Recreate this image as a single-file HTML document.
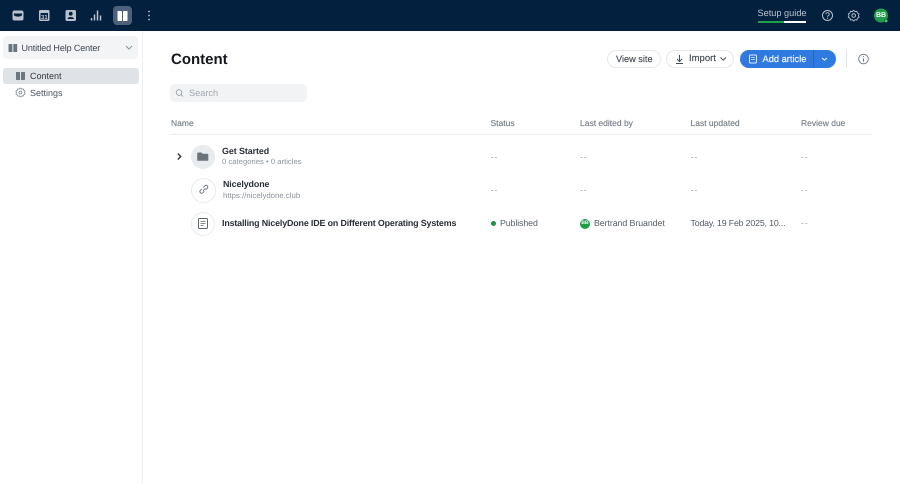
<!DOCTYPE html>
<html><head><meta charset="utf-8"><style>
*{box-sizing:border-box}
html,body{margin:0;padding:0;width:900px;height:484px;overflow:hidden;background:#fff;font-family:"Liberation Sans",sans-serif;color:#2d333a;text-rendering:geometricPrecision}
.t{position:absolute;white-space:nowrap;line-height:14px;font-size:9px}
.h{color:#767f88;font-size:8.500px;top:116px;-webkit-text-stroke:.15px #767f88}
.d{color:#a3a9af;font-size:9px;letter-spacing:.8px}
.b{position:absolute}
svg{position:absolute;overflow:visible}
</style></head><body>
<div class="b" style="left:0;top:0;width:900px;height:31px;background:#03203f"></div>
<div class="b" style="left:113px;top:6px;width:19px;height:19px;border-radius:4px;background:#4d627a"></div>
<svg style="left:0;top:0" width="900" height="31">
<path d="M12.500 12.500a2 2 0 0 1 2-2h7a2 2 0 0 1 2 2v6a2 2 0 0 1-2 2h-7a2 2 0 0 1-2-2z" fill="#b9c2cc"/><path d="M14 13.500h8v1.500a4 1.600 0 0 1-8 0z" fill="#03203f"/>
<rect x="39" y="10" width="10.500" height="11" rx="1.500" fill="#b9c2cc"/><rect x="40.500" y="13" width="7.500" height="6.500" fill="#03203f"/><text x="41" y="19" font-size="6" font-weight="700" fill="#b9c2cc" font-family="Liberation Sans">31</text>
<rect x="65.500" y="10" width="10.500" height="11" rx="1.500" fill="#b9c2cc"/><circle cx="70.700" cy="13.700" r="1.900" fill="#03203f"/><path d="M67.500 19c.3-2.600 6.200-2.600 6.500 0z" fill="#03203f"/>
<path d="M91.500 20.500v-2.500M94.500 20.500v-6M97.500 20.500v-10M100.500 20.500v-5" stroke="#b9c2cc" stroke-width="1.500"/>
<path d="M117.500 11h3.700a.8.8 0 0 1 .8.8v9.200h-3.700a.8.8 0 0 1-.8-.8zM123 11.800a.8.8 0 0 1 .8-.8h3.700v9.200a.8.8 0 0 1-.8.8H123z" fill="#fff"/>
<circle cx="149" cy="11.500" r=".9" fill="#b9c2cc"/><circle cx="149" cy="15.500" r=".9" fill="#b9c2cc"/><circle cx="149" cy="19.500" r=".9" fill="#b9c2cc"/>
<circle cx="827.500" cy="15.500" r="5" fill="none" stroke="#b9c2cc"/><path d="M825.800 14.200a1.700 1.600 0 1 1 2.500 1.500c-.6.300-.8.600-.8 1.100" fill="none" stroke="#b9c2cc" stroke-width=".9"/><circle cx="827.500" cy="18.200" r=".6" fill="#b9c2cc"/>
<circle cx="853.700" cy="15.500" r="1.800" fill="none" stroke="#b9c2cc"/><path d="M853.700 10.300l1.400 1.300 1.800-.3.600 1.800 1.600.9-.7 1.700.7 1.600-1.600.9-.6 1.800-1.800-.3-1.400 1.300-1.400-1.300-1.800.3-.6-1.800-1.600-.9.700-1.600-.7-1.700 1.600-.9.600-1.800 1.800.3z" fill="none" stroke="#b9c2cc" stroke-width=".9"/>
<circle cx="881" cy="15.500" r="7" fill="#1e9e47"/><circle cx="886" cy="20.800" r="1.800" fill="#4fc26b" stroke="#03203f" stroke-width=".5"/>
</svg>
<div class="t" style="left:757.500px;top:6px;color:#b9c2cc;font-size:9.200px">Setup guide</div>
<div class="b" style="left:757.500px;top:20.500px;width:26px;height:2.500px;background:#1e9e47"></div>
<div class="b" style="left:783.500px;top:20.500px;width:22px;height:2.500px;background:#fff"></div>
<div class="t" style="left:875px;top:9px;width:12px;text-align:center;color:#fff;font-size:7px;font-weight:700">BB</div>

<div class="b" style="left:142px;top:31px;width:1px;height:453px;background:#eceef0"></div>
<div class="b" style="left:3px;top:36px;width:135px;height:23px;border-radius:4px;background:#f2f4f6"></div>
<svg style="left:0;top:0" width="143" height="110">
<path d="M8.500 44h3.300a.6.600 0 0 1 .6.600v7.400h-3.300a.6.600 0 0 1-.6-.6zM13.300 44.600a.6.600 0 0 1 .6-.6h3.300v7.400a.6.600 0 0 1-.6.600h-3.300z" fill="#6c7680"/>
<path d="M126 46l3 3 3-3" fill="none" stroke="#8a929a"/>
</svg>
<div class="t" style="left:21.500px;top:41px;font-size:9px;letter-spacing:-.12px;color:#40474e">Untitled Help Center</div>
<div class="b" style="left:3px;top:68px;width:136px;height:16px;border-radius:3px;background:#dfe3e8"></div>
<svg style="left:0;top:0" width="143" height="110">
<path d="M16 72h3.400a.6.600 0 0 1 .6.600v7.400h-3.400a.6.600 0 0 1-.6-.6zM21 72.600a.6.600 0 0 1 .6-.6H25v7.400a.6.600 0 0 1-.6.600H21z" fill="#6c7680"/>
<circle cx="20.500" cy="92.500" r="1.500" fill="none" stroke="#7d858d" stroke-width=".8"/><path d="M20.500 88l1.200 1.100 1.600-.2.500 1.500 1.300.8-.6 1.300.6 1.300-1.300.8-.5 1.500-1.600-.2-1.200 1.100-1.200-1.100-1.600.2-.5-1.500-1.300-.8.600-1.300-.6-1.300 1.300-.8.500-1.500 1.600.2z" fill="none" stroke="#7d858d" stroke-width=".8"/>
</svg>
<div class="t" style="left:30px;top:69px;font-size:9px;color:#33393f">Content</div>
<div class="t" style="left:30px;top:86px;font-size:9px;color:#4d555d">Settings</div>

<div class="t" style="left:171px;top:51px;font-size:15px;line-height:18px;font-weight:700;color:#15191d">Content</div>
<div class="b" style="left:607px;top:50px;width:54px;height:18px;border:1px solid #e6e8eb;border-radius:9px"></div>
<div class="t" style="left:616px;top:52px;font-size:9.200px;color:#454c53;-webkit-text-stroke:.15px #454c53">View site</div>
<div class="b" style="left:666px;top:50px;width:68px;height:18px;border:1px solid #e6e8eb;border-radius:9px"></div>
<div class="t" style="left:689px;top:52px;font-size:9.500px;color:#454c53;-webkit-text-stroke:.15px #454c53">Import</div>
<div class="b" style="left:740px;top:50px;width:96px;height:18px;border-radius:9px;background:#2f7ae0"></div>
<div class="b" style="left:813px;top:50px;width:1px;height:18px;background:#2568c2"></div>
<div class="t" style="left:762.500px;top:52px;font-size:9.300px;color:#eef4fd;-webkit-text-stroke:.2px #eef4fd">Add article</div>
<div class="b" style="left:846px;top:50px;width:1px;height:18px;background:#e2e4e7"></div>
<svg style="left:0;top:0" width="900" height="110">
<path d="M679.500 55v6.500M677 59l2.500 2.500 2.500-2.500M676 63.500h7" fill="none" stroke="#454c53"/>
<path d="M720.500 57.500l2.700 2.700 2.700-2.700" fill="none" stroke="#454c53"/>
<rect x="749.500" y="55" width="7" height="8" rx="1" fill="none" stroke="#dbe8fb"/><path d="M751 57.500h4M751 59.500h4" stroke="#dbe8fb" stroke-width=".7"/>
<path d="M822 58l2.500 2.200 2.500-2.200" fill="none" stroke="#e8f0fc" stroke-width="1.100"/>
<circle cx="863.500" cy="59" r="4.800" fill="none" stroke="#6c7680" stroke-width=".9"/><path d="M863.500 58.500v3" stroke="#6c7680"/><circle cx="863.500" cy="56.700" r=".6" fill="#6c7680"/>
</svg>

<div class="b" style="left:170px;top:84px;width:137px;height:18px;border-radius:5px;background:#f1f3f5"></div>
<svg style="left:0;top:0" width="300" height="110"><circle cx="179" cy="92.500" r="2.800" fill="none" stroke="#8f969d" stroke-width=".8"/><path d="M181 94.500l2 2" stroke="#8f969d" stroke-width=".8"/></svg>
<div class="t" style="left:189px;top:86px;font-size:9.200px;color:#a3a9af">Search</div>

<div class="t h" style="left:171px">Name</div>
<div class="t h" style="left:490.500px">Status</div>
<div class="t h" style="left:580px">Last edited by</div>
<div class="t h" style="left:690.500px">Last updated</div>
<div class="t h" style="left:801px">Review due</div>
<div class="b" style="left:170px;top:134px;width:702px;height:1px;background:#eceef0"></div>

<div class="b" style="left:191px;top:145px;width:24px;height:24px;border-radius:50%;background:#e9ecef"></div>
<div class="b" style="left:191px;top:178px;width:25px;height:25px;border-radius:50%;border:1px solid #e9ebee"></div>
<div class="b" style="left:191px;top:212px;width:24px;height:24px;border-radius:50%;border:1px solid #e9ebee"></div>
<svg style="left:0;top:0" width="300" height="240">
<path d="M177.800 153.500l3 3-3 3" fill="none" stroke="#2d333a" stroke-width="1.300"/>
<path d="M198 152.500h3.500l1 1.200h5a.8.8 0 0 1 .8.800v5.500a.8.8 0 0 1-.8.800h-9.500a.8.800 0 0 1-.8-.8v-6.700a.8.800 0 0 1 .8-.8z" fill="#6b737b"/>
<g transform="translate(1.500,-.5)"><path d="M204.200 190.300l1.600-1.600a1.700 1.700 0 0 0-2.400-2.400l-1.600 1.600M202.800 191.700l-1.600 1.600" fill="none" stroke="#6b737b" stroke-width=".9"/><path d="M201.200 193.300a1.700 1.700 0 0 1-2.400-2.400l1.600-1.600" fill="none" stroke="#6b737b" stroke-width=".9"/>
<path d="M201.500 191.200l2.500-2.500" stroke="#6b737b" stroke-width=".9"/></g>
<rect x="198.500" y="218.500" width="9" height="10" rx="1.200" fill="none" stroke="#5d656d"/><path d="M200.500 221.500h5M200.500 223.500h5M200.500 225.500h3" stroke="#5d656d" stroke-width=".8"/>
</svg>
<div class="t" style="left:222px;top:144px;font-size:8.900px;letter-spacing:-.07px;font-weight:700;color:#2a2f35">Get Started</div>
<div class="t" style="left:222px;top:155px;font-size:7.700px;color:#8d949b">0 categories • 0 articles</div>
<div class="t" style="left:223px;top:177px;font-size:8.900px;letter-spacing:-.1px;font-weight:700;color:#2a2f35">Nicelydone</div>
<div class="t" style="left:223px;top:189px;font-size:7.800px;color:#8d949b">https://nicelydone.club</div>
<div class="t" style="left:222px;top:216px;font-size:8.900px;letter-spacing:-.15px;font-weight:700;color:#2a2f35">Installing NicelyDone IDE on Different Operating Systems</div>

<div class="t d" style="left:490.500px;top:150px">--</div><div class="t d" style="left:580px;top:150px">--</div><div class="t d" style="left:690.500px;top:150px">--</div><div class="t d" style="left:801px;top:150px">--</div>
<div class="t d" style="left:490.500px;top:183px">--</div><div class="t d" style="left:580px;top:183px">--</div><div class="t d" style="left:690.500px;top:183px">--</div><div class="t d" style="left:801px;top:183px">--</div>
<div class="b" style="left:490.500px;top:221px;width:5px;height:5px;border-radius:50%;background:#1e8f44"></div>
<div class="t" style="left:500px;top:216px;font-size:8.800px;letter-spacing:-.1px;color:#555d65">Published</div>
<div class="b" style="left:580px;top:218.500px;width:10px;height:10px;border-radius:50%;background:#1e9e47"></div>
<div class="t" style="left:580px;top:216px;width:10px;text-align:center;font-size:5px;font-weight:700;color:#fff">BB</div>
<div class="t" style="left:594px;top:216px;font-size:8.800px;letter-spacing:-.07px;color:#555d65">Bertrand Bruandet</div>
<div class="t" style="left:690.500px;top:216px;font-size:8.800px;letter-spacing:-.17px;color:#555d65">Today, 19 Feb 2025, 10...</div>
<div class="t d" style="left:801px;top:216px">--</div>
</body></html>
